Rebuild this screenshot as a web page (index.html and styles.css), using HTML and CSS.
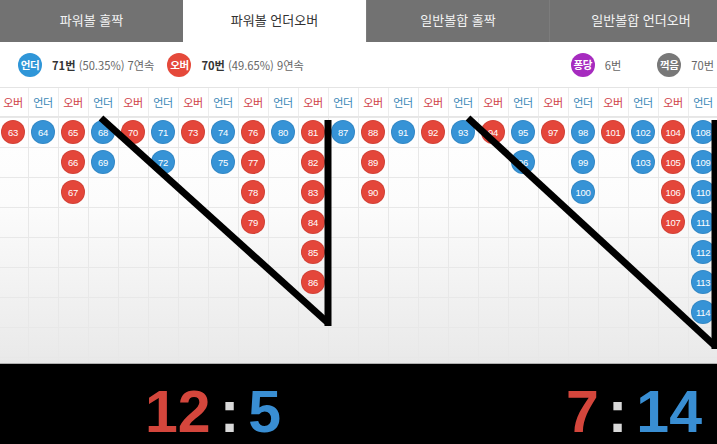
FILE: index.html
```html
<!DOCTYPE html>
<html lang="ko">
<head>
<meta charset="utf-8">
<title>파워볼 언더오버</title>
<link rel="stylesheet" href="styles.css">
</head>
<body>
<div class="page">
  <nav class="tabs">
    <div class="tab">파워볼 홀짝</div>
    <div class="tab active">파워볼 언더오버</div>
    <div class="tab">일반볼합 홀짝</div>
    <div class="tab">일반볼합 언더오버</div>
  </nav>

  <div class="stats">
    <div class="stat"><span class="badge b-under">언더</span><span class="txt"><b>71번</b> <span class="muted">(50.35%) 7연속</span></span></div>
    <div class="stat"><span class="badge b-over">오버</span><span class="txt"><b>70번</b> <span class="muted">(49.65%) 9연속</span></span></div>
    <div class="stat push"><span class="badge b-pong">퐁당</span><span class="txt muted">6번</span></div>
    <div class="stat wide"><span class="badge b-kk">꺽음</span><span class="txt muted">70번</span></div>
  </div>

  <div class="board">
    <div class="head">
      <span class="h over">오버</span><span class="h under">언더</span><span class="h over">오버</span><span class="h under">언더</span>
      <span class="h over">오버</span><span class="h under">언더</span><span class="h over">오버</span><span class="h under">언더</span>
      <span class="h over">오버</span><span class="h under">언더</span><span class="h over">오버</span><span class="h under">언더</span>
      <span class="h over">오버</span><span class="h under">언더</span><span class="h over">오버</span><span class="h under">언더</span>
      <span class="h over">오버</span><span class="h under">언더</span><span class="h over">오버</span><span class="h under">언더</span>
      <span class="h over">오버</span><span class="h under">언더</span><span class="h over">오버</span><span class="h under">언더</span>
    </div>
    <div class="grid">
      <div class="col"><span class="ball red">63</span></div>
      <div class="col"><span class="ball blue">64</span></div>
      <div class="col"><span class="ball red">65</span><span class="ball red">66</span><span class="ball red">67</span></div>
      <div class="col"><span class="ball blue">68</span><span class="ball blue">69</span></div>
      <div class="col"><span class="ball red">70</span></div>
      <div class="col"><span class="ball blue">71</span><span class="ball blue">72</span></div>
      <div class="col"><span class="ball red">73</span></div>
      <div class="col"><span class="ball blue">74</span><span class="ball blue">75</span></div>
      <div class="col"><span class="ball red">76</span><span class="ball red">77</span><span class="ball red">78</span><span class="ball red">79</span></div>
      <div class="col"><span class="ball blue">80</span></div>
      <div class="col"><span class="ball red">81</span><span class="ball red">82</span><span class="ball red">83</span><span class="ball red">84</span><span class="ball red">85</span><span class="ball red">86</span></div>
      <div class="col"><span class="ball blue">87</span></div>
      <div class="col"><span class="ball red">88</span><span class="ball red">89</span><span class="ball red">90</span></div>
      <div class="col"><span class="ball blue">91</span></div>
      <div class="col"><span class="ball red">92</span></div>
      <div class="col"><span class="ball blue">93</span></div>
      <div class="col"><span class="ball red">94</span></div>
      <div class="col"><span class="ball blue">95</span><span class="ball blue">96</span></div>
      <div class="col"><span class="ball red">97</span></div>
      <div class="col"><span class="ball blue">98</span><span class="ball blue">99</span><span class="ball blue">100</span></div>
      <div class="col"><span class="ball red">101</span></div>
      <div class="col"><span class="ball blue">102</span><span class="ball blue">103</span></div>
      <div class="col"><span class="ball red">104</span><span class="ball red">105</span><span class="ball red">106</span><span class="ball red">107</span></div>
      <div class="col"><span class="ball blue">108</span><span class="ball blue">109</span><span class="ball blue">110</span><span class="ball blue">111</span><span class="ball blue">112</span><span class="ball blue">113</span><span class="ball blue">114</span></div>
    </div>
  </div>

  <div class="score">
    <div class="sgroup left"><span class="n red-t">12</span><span class="colon">:</span><span class="n blue-t">5</span></div>
    <div class="sgroup right"><span class="n red-t">7</span><span class="colon">:</span><span class="n blue-t">14</span></div>
  </div>

  <svg class="marks" width="717" height="444" viewBox="0 0 717 444" aria-hidden="true">
    <line x1="101" y1="118" x2="327" y2="322" />
    <line x1="328" y1="120" x2="328" y2="326" />
    <line x1="468" y1="118" x2="714" y2="345" />
    <line x1="715" y1="120" x2="715" y2="349" />
  </svg>
</div>
</body>
</html>
```

FILE: styles.css
```css
* { box-sizing: border-box; }

html, body {
  margin: 0;
  padding: 0;
  background: #fff;
}

body {
  width: 717px;
  height: 444px;
  overflow: hidden;
  font-family: "Noto Sans CJK KR", "Noto Sans", sans-serif;
  color: #333;
}

.page {
  position: relative;
  width: 717px;
  height: 444px;
  overflow: hidden;
}

/* tabs */
.tabs {
  display: grid;
  grid-template-columns: repeat(4, 183px);
  height: 42px;
  background: #717171;
}

.tab {
  height: 42px;
  line-height: 40px;
  text-align: center;
  font-size: 13px;
  color: #f2f2f2;
  background: #727272;
  border-left: 1px solid #7c7c7c;
}

.tab:first-child { border-left: none; }

.tab.active {
  background: #fff;
  color: #333;
  border-left: none;
}

/* stats row */
.stats {
  display: flex;
  align-items: center;
  height: 46px;
  padding: 0 0 0 18px;
  border-bottom: 1px solid #e4e4e4;
  font-size: 11px;
}

.stat {
  display: flex;
  align-items: center;
  gap: 10px;
  margin-right: 13px;
}

.stat.push { margin-left: auto; margin-right: 36px; }
.stat.wide { margin-right: 3px; }

.badge {
  display: inline-flex;
  align-items: center;
  justify-content: center;
  width: 24px;
  height: 24px;
  border-radius: 50%;
  color: #fff;
  font-size: 10.5px;
  font-weight: 700;
  letter-spacing: -0.5px;
}

.b-under { background: #2f96d8; }
.b-over { background: #e5493a; }
.b-pong { background: #a62bbf; }
.b-kk { background: #787878; }

.txt { font-size: 11.2px; }
.txt b { color: #333; font-weight: 700; }
.muted { color: #666; }

/* board */
.board {
  margin-left: -2px;
  width: 720px;
}

.head {
  display: grid;
  grid-template-columns: repeat(24, 30px);
  height: 29px;
  border-bottom: 1px solid #e6e6e6;
  background-image: linear-gradient(to right, #ededed 1px, transparent 1px);
  background-size: 30px 100%;
}

.h {
  display: flex;
  align-items: center;
  justify-content: center;
  font-size: 11px;
  letter-spacing: -0.3px;
}

.h.over { color: #cf4148; }
.h.under { color: #3a87b6; }

.grid {
  display: grid;
  grid-template-columns: repeat(24, 30px);
  height: 247px;
  overflow: hidden;
  border-bottom: 1px solid #b0b0b0;
  background-image:
    linear-gradient(to right, #e8e8e8 1px, transparent 1px),
    linear-gradient(to bottom, #e8e8e8 1px, transparent 1px),
    linear-gradient(to bottom, #ffffff 0%, #fcfcfc 35%, #e9e9e9 100%);
  background-size: 30px 30px, 30px 30px, 100% 100%;
}

.col {
  display: flex;
  flex-direction: column;
  align-items: center;
  gap: 6px;
  padding-top: 3px;
}

.ball {
  display: flex;
  align-items: center;
  justify-content: center;
  width: 24px;
  height: 24px;
  flex: none;
  border-radius: 50%;
  color: #fff;
  font-family: "Liberation Sans", Arial, sans-serif;
  font-size: 9.5px;
  letter-spacing: -0.3px;
  box-shadow: inset 0 0 0 1px rgba(0, 0, 0, 0.08);
}

.ball.red { background: #e4463a; }
.ball.blue { background: #3693d6; }

/* scoreboard */
.score {
  display: flex;
  height: 80px;
  padding: 18px 15px 0 145px;
  background: #000;
  font-family: "Liberation Sans", Arial, sans-serif;
  font-weight: 700;
  font-size: 59px;
  line-height: 60px;
}

.sgroup {
  display: flex;
  gap: 9px;
}

.sgroup.right { margin-left: auto; }

.red-t { color: #d4463c; }
.blue-t { color: #398ed3; }
.colon { color: #d9d9d9; }

/* hand-drawn marks over the board */
.marks {
  position: absolute;
  left: 0;
  top: 0;
  pointer-events: none;
}

.marks line {
  stroke: #000;
  stroke-width: 7;
}
```
